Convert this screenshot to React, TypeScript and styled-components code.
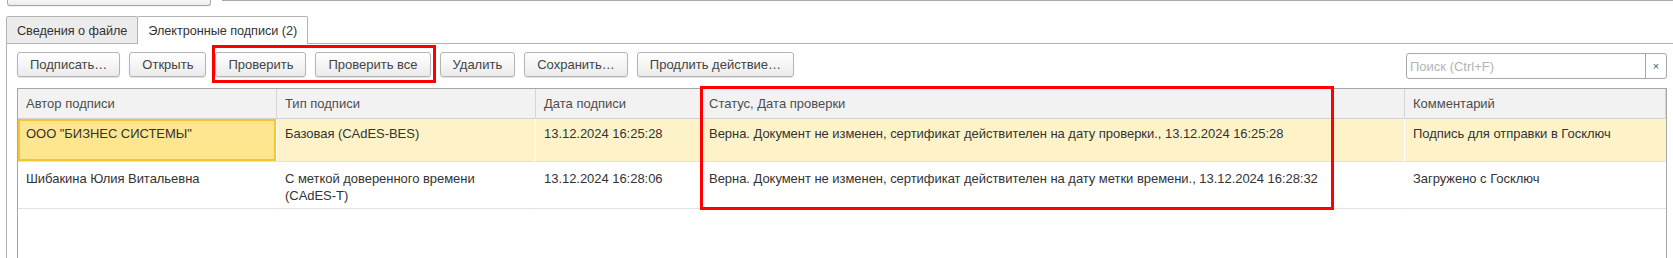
import React from 'react';
import styled, { createGlobalStyle } from 'styled-components';

const GlobalStyle = createGlobalStyle`
  html, body { margin: 0; padding: 0; background: #fff; overflow: hidden; }
  body {
    font-family: "Liberation Sans", Arial, sans-serif;
    font-size: 13px;
    color: #333;
  }
  * { box-sizing: border-box; }
`;

const Page = styled.div`
  width: 1673px;
  height: 258px;
  overflow: hidden;
`;

const TopStrip = styled.div`
  display: flex;
  align-items: flex-start;
  height: 16px;
`;

const StubButton = styled.div`
  margin-left: 7px;
  width: 204px;
  height: 6px;
  border: 1px solid #a8a8a8;
  border-top: none;
  border-radius: 0 0 3px 3px;
  background: linear-gradient(#f6f6f6, #ececec);
  box-shadow: 0 1px 0 rgba(0, 0, 0, 0.06);
`;

const TopField = styled.div`
  margin-left: 11px;
  flex: 1;
  height: 1px;
  background: #a9a9a9;
`;

const TabBar = styled.div`
  display: flex;
  height: 28px;
  padding-left: 6px;
`;

const Tab = styled.div<{ $active?: boolean }>`
  height: 28px;
  padding: 1px 10px 0 10px;
  display: flex;
  align-items: center;
  white-space: nowrap;
  font-size: 12.7px;
  letter-spacing: -0.05px;
  color: #333;
  border: 1px solid #b3b3b3;
  border-bottom: ${(p) => (p.$active ? 'none' : '1px solid #b3b3b3')};
  border-radius: 2px 2px 0 0;
  background: ${(p) => (p.$active ? '#fff' : '#ececec')};
  margin-left: ${(p) => (p.$active ? '-1px' : '0')};
`;

const TabFiller = styled.div`
  flex: 1;
  height: 28px;
  border-bottom: 1px solid #b3b3b3;
`;

const Panel = styled.div`
  margin-left: 6px;
  border-left: 1px solid #b3b3b3;
  padding: 8px 0 0 10px;
  height: 220px;
`;

const Toolbar = styled.div`
  display: flex;
  align-items: flex-start;
  gap: 9px;
  width: 1650px;
  height: 26px;
`;

const Marked = styled.div`
  display: flex;
  gap: 9px;
  position: relative;

  &::after {
    content: '';
    position: absolute;
    left: -3px;
    right: -5px;
    top: -7px;
    bottom: -6px;
    border: 3px solid #ff0000;
    pointer-events: none;
  }
`;

const Button = styled.button`
  height: 25px;
  padding: 0 12px;
  border: 1px solid #b4b4b4;
  border-radius: 3px;
  background: linear-gradient(#ffffff, #ebebeb);
  box-shadow: 0 1px 1px rgba(0, 0, 0, 0.12);
  font-family: "Liberation Sans", Arial, sans-serif;
  font-size: 13px;
  color: #444;
  white-space: nowrap;
  cursor: default;
`;

const Search = styled.div`
  margin-left: auto;
  margin-top: 1px;
  width: 261px;
  height: 26px;
  display: flex;
  border: 1px solid #a8a8a8;
  border-radius: 3px;
  background: #fff;
`;

const SearchInput = styled.div`
  flex: 1;
  padding-left: 3px;
  display: flex;
  align-items: center;
  color: #b4b4b4;
  font-size: 13px;
`;

const ClearButton = styled.div`
  width: 21px;
  border-left: 1px solid #a8a8a8;
  display: flex;
  align-items: center;
  justify-content: center;
  color: #555;
  font-size: 11px;
`;

const TableWrap = styled.div`
  position: relative;
  margin-top: 10px;
  width: 1650px;
`;

const Table = styled.div`
  border: 1px solid #a6a6a6;
  border-bottom: none;
  height: 200px;
  display: grid;
  grid-template-columns: 259px 259px 165px 704px 261px;
  grid-auto-rows: min-content;
  align-content: start;
`;

const HeadCell = styled.div`
  height: 30px;
  padding: 0 9px 0 8px;
  display: flex;
  align-items: center;
  background: #f2f2f2;
  color: #4d4d4d;
  border-right: 1px solid #d6d6d6;
  border-bottom: 1px solid #d2d2d2;
  white-space: nowrap;
  &:last-child { border-right: none; }
`;

const Cell = styled.div<{ $selected?: boolean; $focused?: boolean; $height: number; $padTop: number }>`
  height: ${(p) => p.$height}px;
  padding: ${(p) => p.$padTop}px 9px 0 8px;
  line-height: 17px;
  letter-spacing: -0.04px;
  color: #333;
  background: ${(p) => (p.$focused ? '#fde68f' : p.$selected ? '#fef3c8' : '#fff')};
  border-right: 1px solid #fff;
  border-bottom: 1px solid #e2e2e2;
  box-shadow: ${(p) => (p.$focused ? 'inset 0 0 0 2px #f7c531' : 'none')};
  &:nth-child(5n) { border-right: none; }
`;

const Callout = styled.div<{ $left: number; $top: number; $width: number; $height: number }>`
  position: absolute;
  left: ${(p) => p.$left}px;
  top: ${(p) => p.$top}px;
  width: ${(p) => p.$width}px;
  height: ${(p) => p.$height}px;
  border: 3px solid #ff0000;
  pointer-events: none;
`;

const headers = ['Автор подписи', 'Тип подписи', 'Дата подписи', 'Статус, Дата проверки', 'Комментарий'];

const rows = [
  {
    selected: true,
    height: 43,
    padTop: 6,
    cells: [
      'ООО "БИЗНЕС СИСТЕМЫ"',
      'Базовая (CAdES-BES)',
      '13.12.2024 16:25:28',
      'Верна. Документ не изменен, сертификат действителен на дату проверки., 13.12.2024 16:25:28',
      'Подпись для отправки в Госключ',
    ],
  },
  {
    selected: false,
    height: 47,
    padTop: 8,
    cells: [
      'Шибакина Юлия Витальевна',
      'С меткой доверенного времени (CAdES-T)',
      '13.12.2024 16:28:06',
      'Верна. Документ не изменен, сертификат действителен на дату метки времени., 13.12.2024 16:28:32',
      'Загружено с Госключ',
    ],
  },
];

export default function App() {
  return (
    <Page>
      <GlobalStyle />
      <TopStrip>
        <StubButton />
        <TopField />
      </TopStrip>
      <TabBar>
        <Tab>Сведения о файле</Tab>
        <Tab $active>Электронные подписи (2)</Tab>
        <TabFiller />
      </TabBar>
      <Panel>
        <Toolbar>
          <Button>Подписать…</Button>
          <Button>Открыть</Button>
          <Marked>
            <Button>Проверить</Button>
            <Button>Проверить все</Button>
          </Marked>
          <Button>Удалить</Button>
          <Button>Сохранить…</Button>
          <Button>Продлить действие…</Button>
          <Search>
            <SearchInput>Поиск (Ctrl+F)</SearchInput>
            <ClearButton>×</ClearButton>
          </Search>
        </Toolbar>
        <TableWrap>
          <Table>
            {headers.map((h) => (
              <HeadCell key={h}>{h}</HeadCell>
            ))}
            {rows.map((r, ri) =>
              r.cells.map((c, ci) => (
                <Cell
                  key={`${ri}-${ci}`}
                  $selected={r.selected}
                  $focused={r.selected && ci === 0}
                  $height={r.height}
                  $padTop={r.padTop}
                >
                  {c}
                </Cell>
              ))
            )}
          </Table>
          <Callout $left={683} $top={-2} $width={634} $height={124} />
        </TableWrap>
      </Panel>
    </Page>
  );
}
